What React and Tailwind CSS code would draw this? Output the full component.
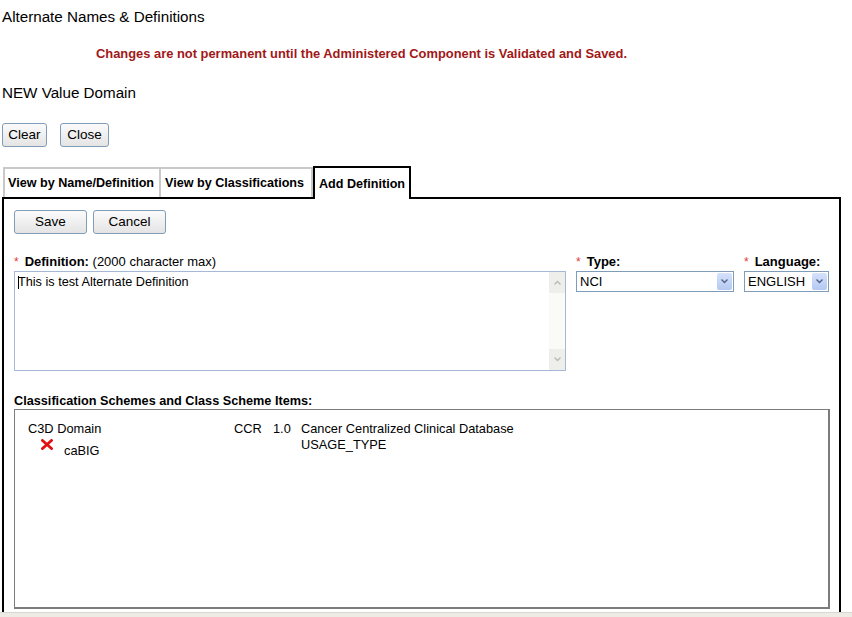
import React from 'react';

const Btn = ({ children, className = '' }) => (
  <button
    className={`h-[24px] rounded-[3px] border border-[#7f9db9] bg-gradient-to-b from-[#fbfbfb] to-[#e4e4e4] text-[13.5px] leading-none text-black ${className}`}
  >
    {children}
  </button>
);

const Req = () => <span className="mr-[6px] text-[12px] font-normal text-[#e03a3a]">*</span>;

const Chevron = ({ up = false, color = '#4d6185' }) => (
  <svg width="7" height="5" viewBox="0 0 7 5">
    <path
      d={up ? 'M0.5 4.5 L3.5 1.5 L6.5 4.5' : 'M0.5 0.5 L3.5 3.5 L6.5 0.5'}
      fill="none"
      stroke={color}
      strokeWidth="1.3"
    />
  </svg>
);

const Select = ({ value, width }) => (
  <div className={`flex h-[21px] border border-[#7f9db9] bg-white ${width}`}>
    <div className="flex-1 pl-[3px] text-[13px] leading-[19px]">{value}</div>
    <div className="m-[1px] flex w-[15px] items-center justify-center rounded-[2px] bg-gradient-to-b from-[#d6e2fb] to-[#b4c8f2]">
      <Chevron />
    </div>
  </div>
);

const RedX = () => (
  <svg width="12" height="11" viewBox="0 0 12 11" className="mt-[1px]">
    <path d="M1.5 1.5 L10.5 9.5 M10.5 1.5 L1.5 9.5" stroke="#e01010" strokeWidth="2.8" strokeLinecap="square" />
  </svg>
);

export default function App() {
  return (
    <div
      className="relative h-[617px] w-[852px] overflow-hidden bg-white text-black"
      style={{ fontFamily: '"Liberation Sans", Arial, sans-serif' }}
    >
      <div className="pl-[2px] pt-[9px] text-[15.2px] leading-[16px]">Alternate Names &amp; Definitions</div>

      <div className="mt-[22px] pl-[96px] text-[12.9px] font-bold leading-[14px] text-[#a11818]">
        Changes are not permanent until the Administered Component is Validated and Saved.
      </div>

      <div className="mt-[24px] pl-[2px] text-[15.2px] leading-[16px]">NEW Value Domain</div>

      <div className="mt-[22px] flex gap-[13px] pl-[2px]">
        <Btn className="w-[45px]">Clear</Btn>
        <Btn className="w-[49px]">Close</Btn>
      </div>

      <div className="mt-[19px] flex items-end pl-[3px] text-[12.6px] font-bold">
        <div className="flex h-[30px] w-[158px] items-center border-2 border-b-0 border-[#c9c9c9] pl-[3px]">
          View by Name/Definition
        </div>
        <div className="flex h-[30px] w-[152px] items-center border-2 border-b-0 border-l-0 border-[#c9c9c9] pl-[4px]">
          View by Classifications
        </div>
        <div className="relative z-10 -mb-[2px] flex h-[33px] w-[98px] items-center border-2 border-b-0 border-black bg-white pl-[4px] pt-[2px]">
          Add Definition
        </div>
      </div>

      <div className="ml-[2px] h-[420px] w-[839px] border-2 border-black pl-[10px] pt-[11px]">
        <div className="flex gap-[6px]">
          <Btn className="w-[73px]">Save</Btn>
          <Btn className="w-[73px]">Cancel</Btn>
        </div>

        <div className="mt-[21px] flex gap-[10px]">
          <div className="w-[552px]">
            <div className="mb-[2px] text-[13px] leading-[14px]">
              <Req />
              <span className="font-bold">Definition:</span> (2000 character max)
            </div>
            <div className="flex h-[100px] border border-[#a5b9d6] bg-white">
              <div className="flex flex-1 items-start pl-[3px] pt-[3px] text-[12.7px] leading-[15px]">
                <span className="mt-[1px] mr-[-1px] h-[13px] w-[1px] bg-black" />
                This is test Alternate Definition
              </div>
              <div className="flex w-[16px] flex-col justify-between bg-[#fafaf6]">
                <div className="flex h-[21px] items-center justify-center bg-[#eeeeea]">
                  <Chevron up color="#b8b8b8" />
                </div>
                <div className="flex h-[21px] items-center justify-center bg-[#eeeeea]">
                  <Chevron color="#b8b8b8" />
                </div>
              </div>
            </div>
          </div>

          <div className="w-[158px]">
            <div className="mb-[2px] text-[13px] font-bold leading-[14px]">
              <Req />
              Type:
            </div>
            <Select value="NCI" width="w-[158px]" />
          </div>

          <div className="w-[85px]">
            <div className="mb-[2px] text-[13px] font-bold leading-[14px]">
              <Req />
              Language:
            </div>
            <Select value="ENGLISH" width="w-[85px]" />
          </div>
        </div>

        <div className="mt-[23px] text-[12.7px] font-bold leading-[14px]">
          Classification Schemes and Class Scheme Items:
        </div>
        <div className="mt-[1px] h-[200px] w-[816px] border border-b-2 border-r-2 border-[#7c7c7c] pl-[13px] pt-[11px] text-[12.8px] leading-[16px]">
          <div className="flex">
            <div className="w-[206px]">
              <div>C3D Domain</div>
              <div className="mt-[1px] flex items-start gap-[11px] pl-[13px]">
                <RedX />
                <span className="mt-[5px]">caBIG</span>
              </div>
            </div>
            <div className="w-[39px]">CCR</div>
            <div className="w-[28px]">1.0</div>
            <div>
              <div>Cancer Centralized Clinical Database</div>
              <div>USAGE_TYPE</div>
            </div>
          </div>
        </div>
      </div>

      <div className="absolute bottom-0 left-0 h-[5px] w-full border-t border-[#d8d8d0] bg-[#ececE4]" />
    </div>
  );
}
